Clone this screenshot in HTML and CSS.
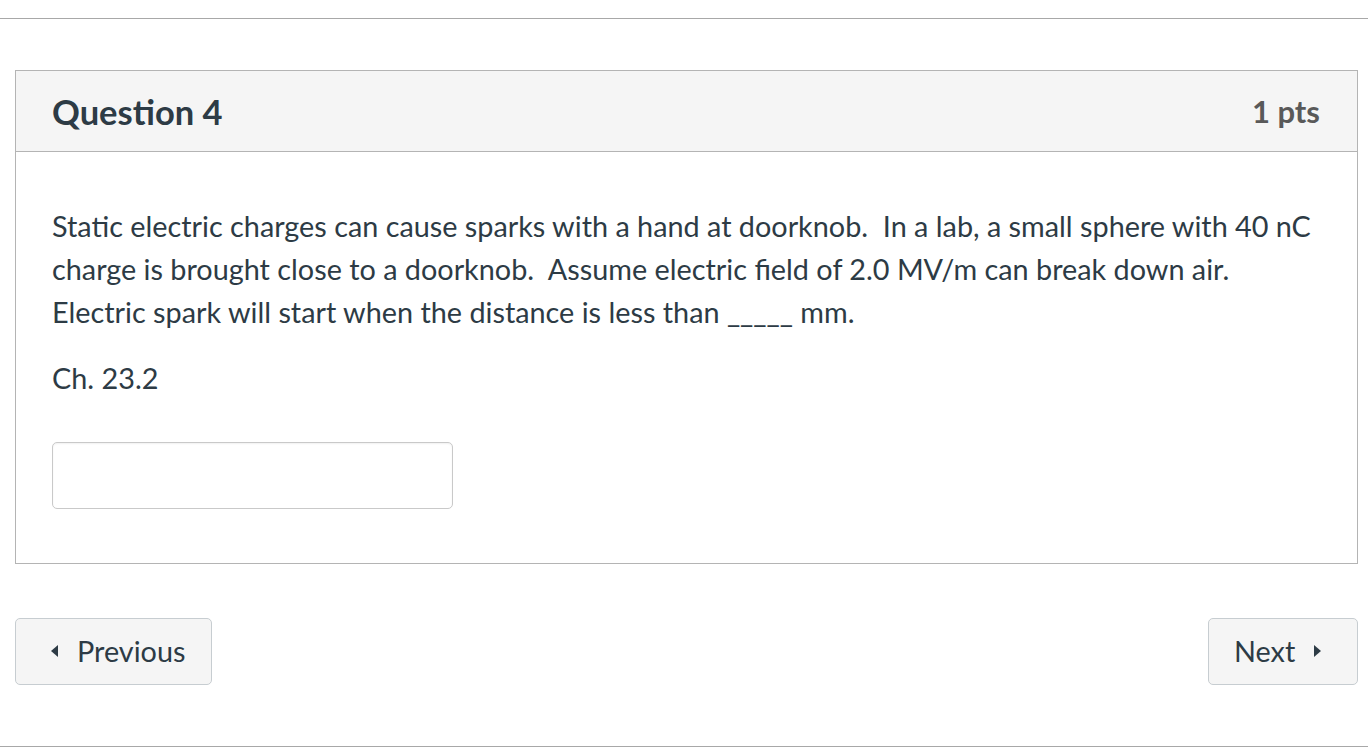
FILE: index.html
```html
<!DOCTYPE html>
<html lang="en">
<head>
<meta charset="utf-8">
<title>Question 4</title>
<link rel="stylesheet" href="styles.css">
</head>
<body>
<div class="page">
  <hr class="rule rule-top">
  <div class="question">
    <div class="q-header">
      <h2 class="q-title">Question 4</h2>
      <span class="q-points">1 pts</span>
    </div>
    <div class="q-body">
      <p class="q-text">Static electric charges can cause sparks with a hand at doorknob.&nbsp; In a lab, a small sphere with 40 nC charge is brought close to a doorknob.&nbsp; Assume electric field of 2.0 MV/m can break down air.&nbsp; Electric spark will start when the distance is less than _____ mm.</p>
      <p class="q-text q-ref">Ch. 23.2</p>
      <input class="answer" type="text" aria-label="Answer">
    </div>
  </div>
  <div class="nav">
    <button class="btn btn-prev" type="button">
      <svg class="tri" width="7" height="12" viewBox="0 0 7 12"><path d="M7 0 L0 6 L7 12 Z" fill="#2d3b45"/></svg>
      <span>Previous</span>
    </button>
    <button class="btn btn-next" type="button">
      <span>Next</span>
      <svg class="tri" width="7" height="12" viewBox="0 0 7 12"><path d="M0 0 L7 6 L0 12 Z" fill="#2d3b45"/></svg>
    </button>
  </div>
  <hr class="rule rule-bottom">
</div>
</body>
</html>
```

FILE: styles.css
```css
* { box-sizing: border-box; }

html, body {
  margin: 0;
  padding: 0;
  background: #ffffff;
}

body {
  font-family: Lato, "Liberation Sans", sans-serif;
  color: #2d3b45;
}

.page {
  padding-top: 18px;
}

.rule {
  border: 0;
  border-top: 1px solid #a8a8a8;
  margin: 0;
  height: 0;
}

.question {
  margin: 51px 10px 0 15px;
  border: 1px solid #b4b4b4;
}

.q-header {
  display: flex;
  align-items: center;
  justify-content: space-between;
  height: 81px;
  padding: 0 37px 0 36px;
  background: #f5f5f5;
  border-bottom: 1px solid #b4b4b4;
}

.q-title {
  margin: 0;
  font-size: 34.5px;
  font-weight: 700;
  color: #2d3b45;
}

.q-points {
  font-size: 31px;
  font-weight: 700;
  color: #595959;
}

.q-body {
  padding: 53px 36px 54px 36px;
}

.q-text {
  margin: 0;
  font-size: 28.8px;
  line-height: 43.2px;
}

.q-ref {
  margin-top: 22px;
}

.answer {
  display: block;
  margin-top: 42px;
  width: 401px;
  height: 67px;
  border: 1px solid #c9c9c9;
  border-radius: 5px;
  box-shadow: inset 0 1px 2px rgba(0, 0, 0, 0.06);
  background: #fff;
  font: inherit;
}

.nav {
  display: flex;
  justify-content: space-between;
  margin: 54px 10px 61px 15px;
}

.btn {
  display: flex;
  align-items: center;
  height: 67px;
  border: 1px solid #c7cdd1;
  border-radius: 5px;
  background: #f5f5f5;
  font-family: Lato, "Liberation Sans", sans-serif;
  font-size: 28.8px;
  color: #2d3b45;
  cursor: pointer;
}

.btn-prev {
  width: 197px;
  padding: 0 0 0 35px;
  gap: 19px;
}

.btn-next {
  width: 150px;
  padding: 0 0 0 25px;
  gap: 19px;
}

.tri { display: block; }
```
